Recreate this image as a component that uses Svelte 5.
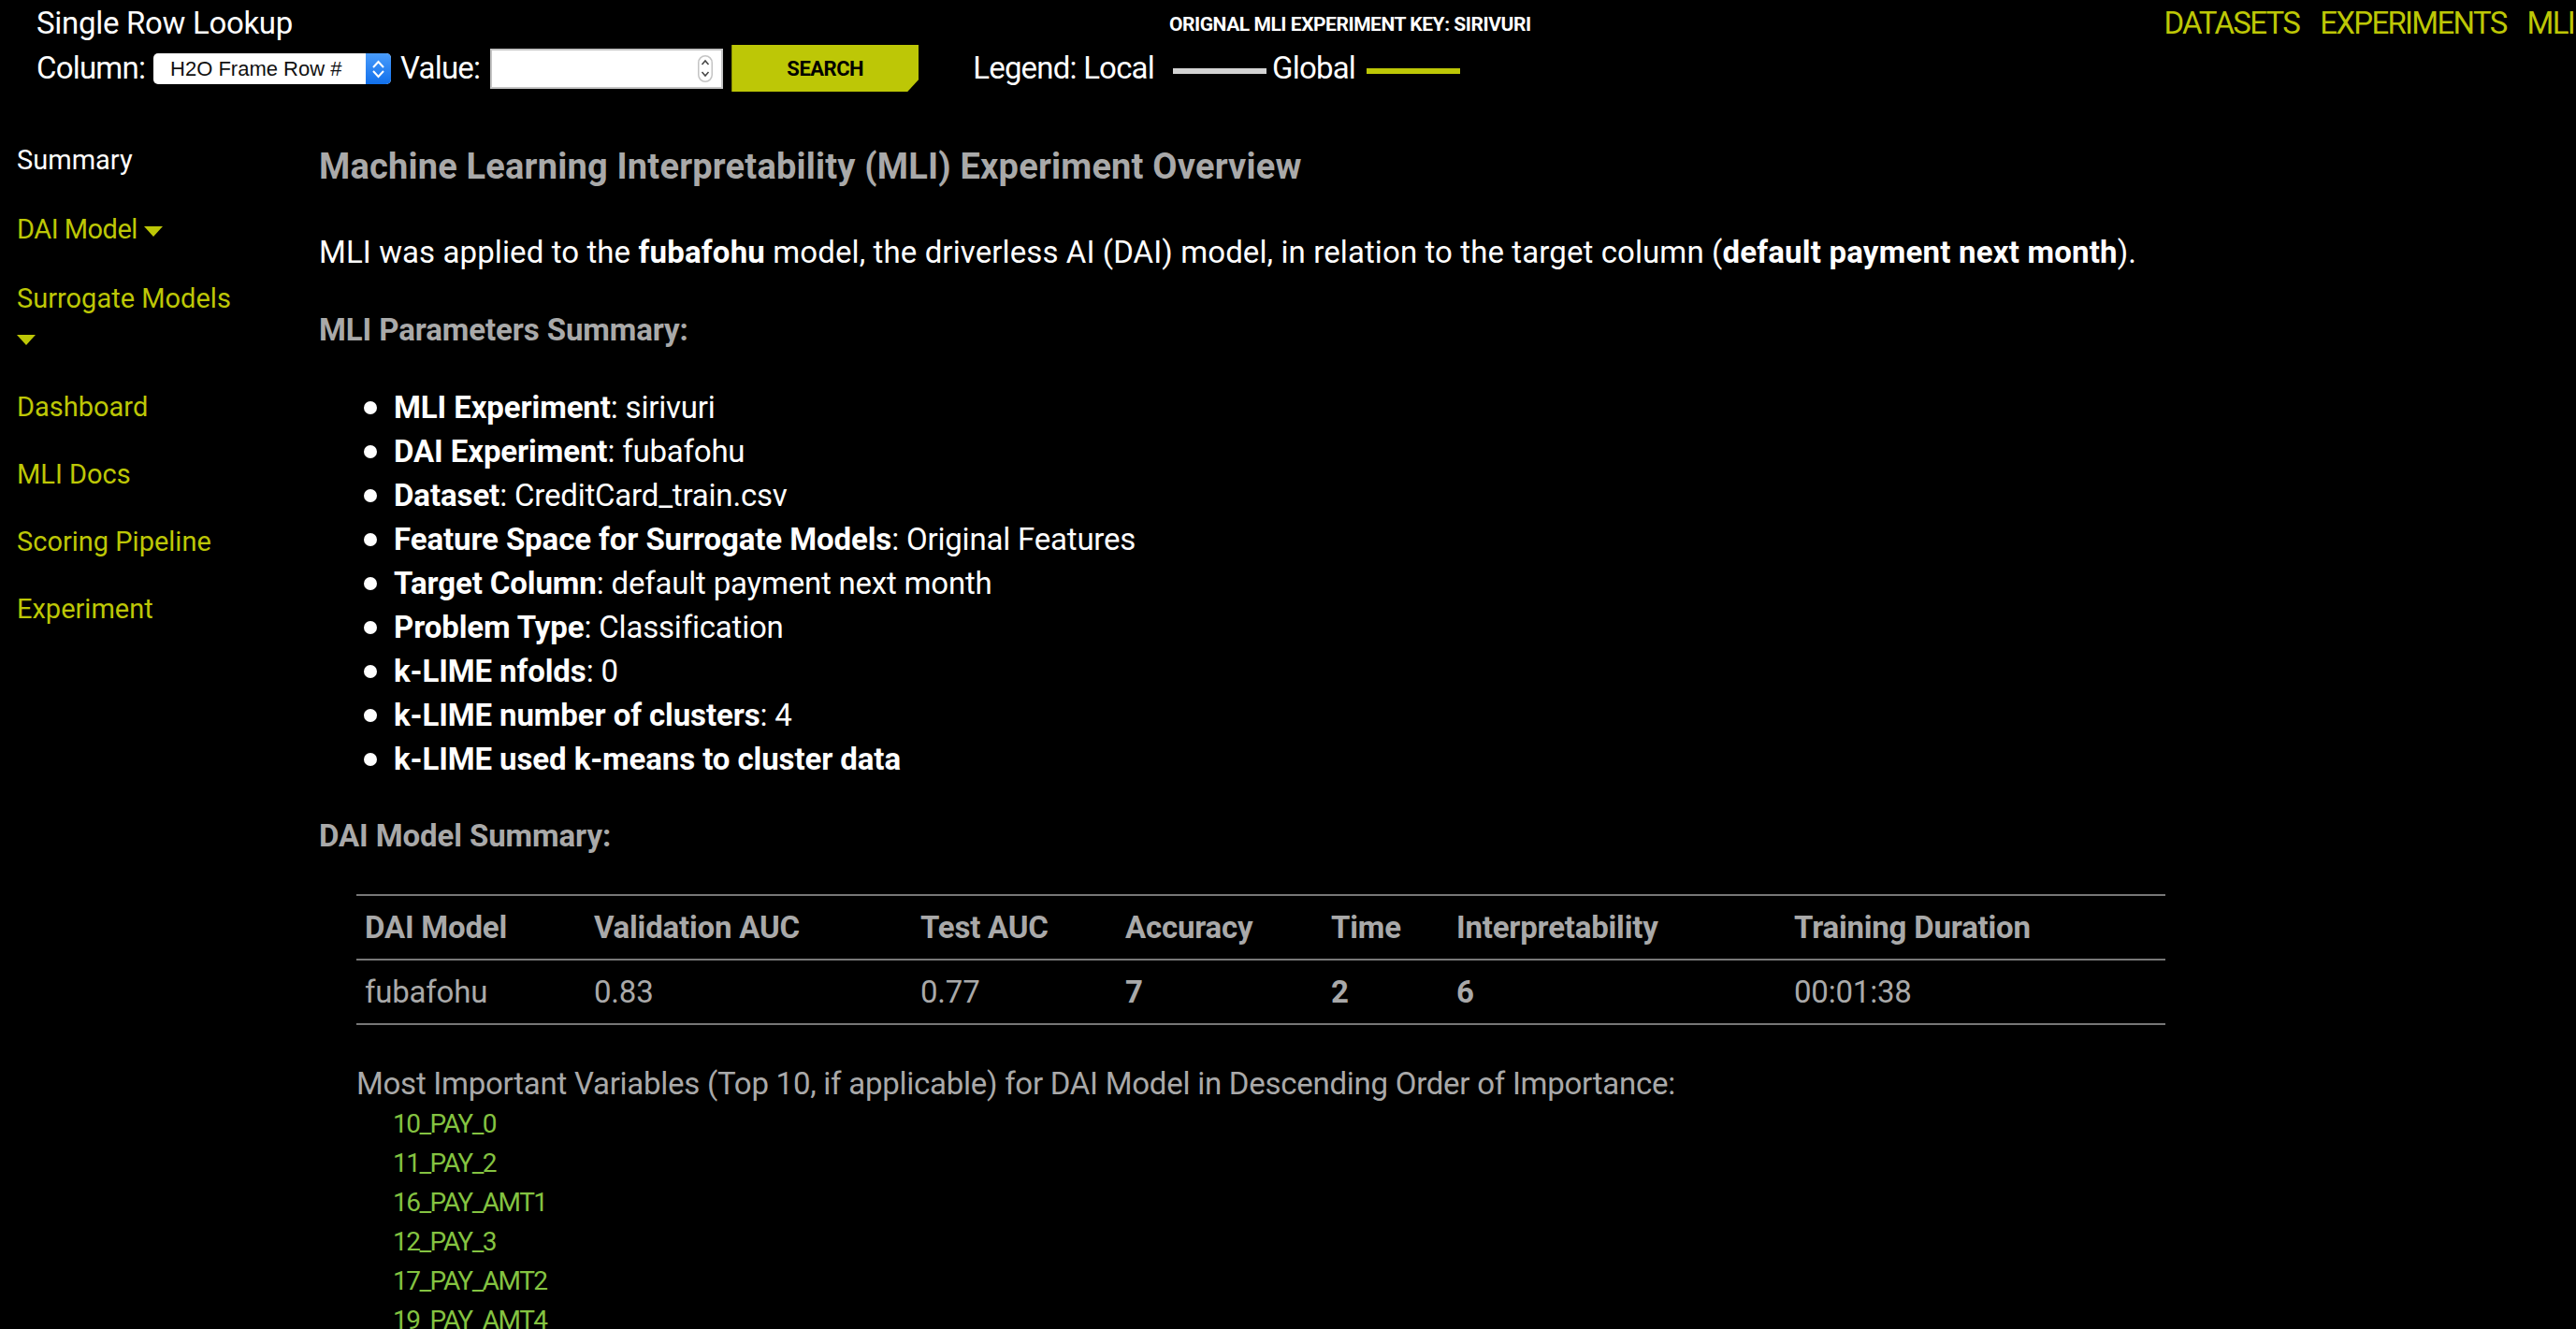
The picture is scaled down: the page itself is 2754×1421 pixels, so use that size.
<script>
  const params = [
    ['MLI Experiment', 'sirivuri'],
    ['DAI Experiment', 'fubafohu'],
    ['Dataset', 'CreditCard_train.csv'],
    ['Feature Space for Surrogate Models', 'Original Features'],
    ['Target Column', 'default payment next month'],
    ['Problem Type', 'Classification'],
    ['k-LIME nfolds', '0'],
    ['k-LIME number of clusters', '4'],
    ['k-LIME used k-means to cluster data', '']
  ];
  const vars = ['10_PAY_0', '11_PAY_2', '16_PAY_AMT1', '12_PAY_3', '17_PAY_AMT2', '19_PAY_AMT4'];
  const columns = [
    { head: 'DAI Model', value: 'fubafohu', w: 245 },
    { head: 'Validation AUC', value: '0.83', w: 349 },
    { head: 'Test AUC', value: '0.77', w: 219 },
    { head: 'Accuracy', value: '7', w: 220, strong: true },
    { head: 'Time', value: '2', w: 134, strong: true },
    { head: 'Interpretability', value: '6', w: 361, strong: true },
    { head: 'Training Duration', value: '00:01:38', w: 406 }
  ];
</script>

<div class="page">
  <header class="top">
    <div class="lookup">
      <div class="lookup-title">Single Row Lookup</div>
      <div class="lookup-row">
        <span class="lbl">Column:</span>
        <div class="select">
          <span class="select-text">H2O Frame Row #</span>
          <span class="select-btn">
            <svg viewBox="0 0 27 33" width="27" height="33" aria-hidden="true">
              <path d="M8 15 L13.5 9 L19 15 M8 19 L13.5 25 L19 19" fill="none" stroke="#fff" stroke-width="2" />
            </svg>
          </span>
        </div>
        <span class="lbl value-lbl">Value:</span>
        <div class="value-input">
          <span class="spin">
            <svg viewBox="0 0 16 29" width="16" height="29" aria-hidden="true">
              <rect x="0.75" y="0.75" width="14.5" height="27.5" rx="7.25" fill="#fff" stroke="#c4c4c4" stroke-width="1.5" />
              <path d="M4.5 10 L8 6 L11.5 10 M4.5 18 L8 22 L11.5 18" fill="none" stroke="#444" stroke-width="1.5" />
            </svg>
          </span>
        </div>
        <button class="search">SEARCH</button>
        <div class="legend">
          <span class="lbl">Legend: Local</span>
          <span class="swatch local"></span>
          <span class="lbl">Global</span>
          <span class="swatch global"></span>
        </div>
      </div>
    </div>
    <div class="exp-key">ORIGNAL MLI EXPERIMENT KEY: SIRIVURI</div>
    <nav class="topnav">
      <span>DATASETS</span>
      <span>EXPERIMENTS</span>
      <span>MLI</span>
    </nav>
  </header>

  <div class="body">
    <aside class="side">
      <div class="side-item active">Summary</div>
      <div class="side-item first">DAI Model <i class="caret"></i></div>
      <div class="side-item narrow">Surrogate Models <i class="caret"></i></div>
      <div class="side-item">Dashboard</div>
      <div class="side-item">MLI Docs</div>
      <div class="side-item">Scoring Pipeline</div>
      <div class="side-item">Experiment</div>
    </aside>

    <main class="main">
      <h1>Machine Learning Interpretability (MLI) Experiment Overview</h1>
      <p class="intro">MLI was applied to the <b>fubafohu</b> model, the driverless AI (DAI) model, in relation to the target column (<b>default payment next month</b>).</p>
      <h2>MLI Parameters Summary:</h2>
      <ul class="params">
        {#each params as [k, v]}
          <li><b>{k}</b>{#if v}: {v}{/if}</li>
        {/each}
      </ul>
      <h2 class="model-h">DAI Model Summary:</h2>
      <table class="tbl">
        <thead>
          <tr>
            {#each columns as c}
              <th style="width: {c.w}px">{c.head}</th>
            {/each}
          </tr>
        </thead>
        <tbody>
          <tr>
            {#each columns as c}
              <td class:strong={c.strong}>{c.value}</td>
            {/each}
          </tr>
        </tbody>
      </table>
      <div class="vars">
        <div class="vars-title">Most Important Variables (Top 10, if applicable) for DAI Model in Descending Order of Importance:</div>
        {#each vars as v}
          <div class="var">{v}</div>
        {/each}
      </div>
    </main>
  </div>
</div>

<style>
  :global(html), :global(body) {
    margin: 0;
    background: #000;
    overflow: hidden;
  }
  .page {
    width: 2754px;
    height: 1421px;
    overflow: hidden;
    background: #000;
    color: #fff;
    font-family: Roboto, "Liberation Sans", sans-serif;
    font-size: 33px;
    letter-spacing: 0.1px;
  }
  .top {
    position: relative;
    height: 130px;
  }
  .lookup {
    padding: 4px 0 0 39px;
  }
  .lookup-title {
    height: 42px;
    line-height: 42px;
    letter-spacing: -0.3px;
  }
  .lookup-row {
    display: flex;
    align-items: center;
    height: 50px;
    margin-top: 2px;
  }
  .lbl {
    line-height: 50px;
    letter-spacing: -0.8px;
  }
  .select {
    margin-left: 9px;
    width: 254px;
    height: 33px;
    display: flex;
    justify-content: space-between;
    background: #fff;
    border-radius: 5px;
    overflow: hidden;
  }
  .select-text {
    color: #111;
    font-family: "Liberation Sans", sans-serif;
    font-size: 22px;
    line-height: 34px;
    letter-spacing: 0;
    padding-left: 18px;
  }
  .select-btn {
    width: 27px;
    background: linear-gradient(#4a9cfb, #1170ec);
    display: flex;
  }
  .value-lbl {
    margin-left: 10px;
  }
  .value-input {
    margin-left: 11px;
    width: 245px;
    height: 39px;
    background: #fff;
    border: 2px solid #c4c4c4;
    display: flex;
    align-items: center;
    justify-content: flex-end;
  }
  .spin {
    display: flex;
    margin-right: 9px;
  }
  .search {
    margin-left: 9px;
    width: 200px;
    height: 50px;
    padding: 0;
    border: 0;
    background: #bdc706;
    color: #000;
    font-family: inherit;
    font-weight: 700;
    font-size: 22px;
    letter-spacing: -0.5px;
    clip-path: polygon(0 0, 100% 0, 100% 74%, 94% 100%, 0 100%);
  }
  .legend {
    display: flex;
    align-items: center;
    margin-left: 58px;
  }
  .swatch {
    display: block;
    width: 100px;
    height: 6px;
    margin-left: 20px;
    margin-top: 6px;
  }
  .swatch.local {
    background: #d3d3d3;
    margin-right: 6px;
  }
  .swatch.global {
    background: #bdc706;
    margin-left: 12px;
  }
  .exp-key {
    position: absolute;
    left: 1250px;
    top: 13px;
    font-size: 21px;
    line-height: 26px;
    font-weight: 700;
    letter-spacing: -0.45px;
  }
  .topnav {
    position: absolute;
    right: 0;
    top: 4px;
    display: flex;
    gap: 22px;
    color: #bdc706;
    line-height: 42px;
    letter-spacing: -1.7px;
    padding-right: 2px;
  }
  .body {
    display: flex;
  }
  .side {
    width: 341px;
    flex: none;
    box-sizing: border-box;
    padding: 20px 0 0 18px;
    color: #bdc706;
    font-size: 29px;
    letter-spacing: 0;
  }
  .side-item {
    line-height: 42px;
    margin-bottom: 30px;
  }
  .side-item.active,
  .side-item.first {
    margin-bottom: 32px;
  }
  .side-item.first {
    letter-spacing: -0.5px;
  }
  .side-item.active {
    color: #fff;
  }
  .side-item.narrow {
    width: 245px;
    margin-bottom: 32px;
  }
  .caret {
    display: inline-block;
    width: 0;
    height: 0;
    border-left: 10px solid transparent;
    border-right: 10px solid transparent;
    border-top: 11px solid #bdc706;
    vertical-align: middle;
    margin-left: 0;
  }
  .main {
    flex: 1;
    min-width: 0;
  }
  h1 {
    margin: 26px 0 0;
    font-size: 38px;
    line-height: 44px;
    font-weight: 700;
    color: #a9a9a9;
    letter-spacing: 0.2px;
  }
  .intro {
    margin: 48px 0 0;
    line-height: 44px;
  }
  b {
    letter-spacing: 0.2px;
  }
  h2 {
    margin: 39px 0 0;
    font-size: 33px;
    line-height: 44px;
    font-weight: 700;
    color: #a9a9a9;
    letter-spacing: -0.1px;
  }
  .params {
    margin: 37px 0 0;
    padding: 0 0 0 80px;
    line-height: 47px;
    list-style: none;
    letter-spacing: -0.2px;
  }
  .params li {
    height: 47px;
  }
  .params li::before {
    content: "";
    display: inline-block;
    width: 14px;
    height: 14px;
    margin-left: -32px;
    margin-right: 18px;
    border-radius: 50%;
    background: #fff;
    vertical-align: 4px;
  }
  .params b {
    letter-spacing: -0.1px;
  }
  .model-h {
    margin-top: 37px;
  }
  .tbl {
    margin: 40px 0 0 40px;
    width: 1934px;
    table-layout: fixed;
    border-collapse: collapse;
    color: #a9a9a9;
    letter-spacing: -0.2px;
  }
  .tbl th,
  .tbl td {
    padding: 0 0 0 9px;
    text-align: left;
    height: 69px;
    line-height: 44px;
    box-sizing: border-box;
  }
  .tbl th {
    border-top: 2px solid #777;
    border-bottom: 2px solid #777;
    font-weight: 700;
  }
  .tbl td {
    border-bottom: 2px solid #777;
  }
  .tbl td.strong {
    font-weight: 700;
  }
  .vars {
    margin: 41px 0 0 40px;
    color: #a9a9a9;
  }
  .vars-title {
    line-height: 44px;
    letter-spacing: -0.26px;
  }
  .var {
    color: #84c341;
    font-size: 28px;
    line-height: 42px;
    letter-spacing: -1.5px;
    padding-left: 39px;
  }
</style>
